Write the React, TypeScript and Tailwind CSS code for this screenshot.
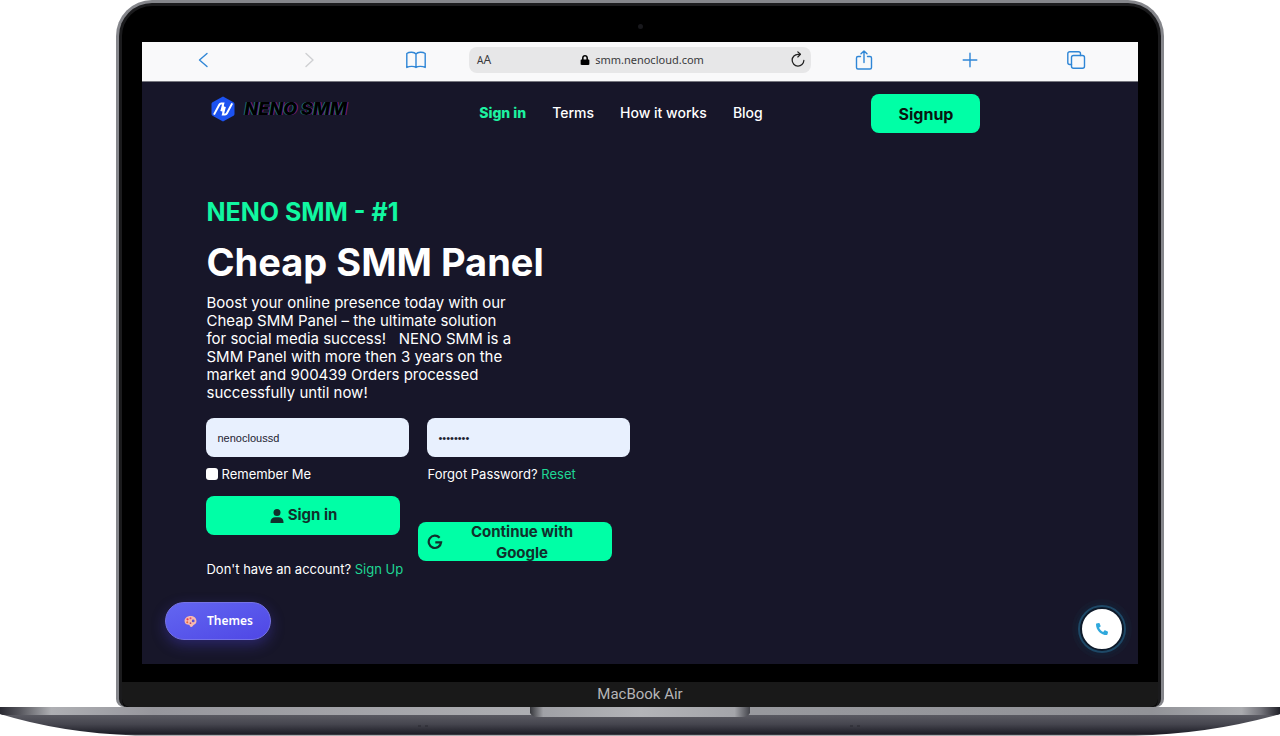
import React from "react";
import { FaLock, FaPhone } from "react-icons/fa";

const navLinks = ["Terms", "How it works", "Blog"];

const fieldClass =
  "h-[39px] w-[203px] rounded-lg bg-[#e8f0fe] px-[11px] font-['Liberation_Sans',sans-serif] text-[11px] text-[#1d2230] outline-none";
const actionClass =
  "flex h-[39px] w-[194px] items-center rounded-lg bg-[#00ffa6] text-[15px] font-bold text-[#10302c]";

function LineIcon({ children, muted = false }: { children: React.ReactNode; muted?: boolean }) {
  return (
    <svg
      viewBox="0 0 24 24"
      fill="none"
      strokeWidth="1.4"
      strokeLinecap="round"
      strokeLinejoin="round"
      aria-hidden="true"
      className={muted ? "size-6 stroke-[#cfd0d2]" : "size-6 stroke-[#2f86d6]"}
    >
      {children}
    </svg>
  );
}

function ToolButton({ label, children }: { label: string; children: React.ReactNode }) {
  return (
    <button type="button" aria-label={label} className="flex justify-center">
      {children}
    </button>
  );
}

function BrowserBar() {
  return (
    <div className="grid h-10 grid-cols-[1fr_1fr_1fr_342px_1fr_1fr_1fr] items-center border-b border-[#77777f] bg-[#f9f9fa] px-2 pb-[3px]">
      <ToolButton label="Back">
        <LineIcon>
          <path d="M15 5.500 7.500 12l7.500 6.500" />
        </LineIcon>
      </ToolButton>
      <ToolButton label="Forward">
        <LineIcon muted>
          <path d="m8 5.500 7 6.500-7 6.500" />
        </LineIcon>
      </ToolButton>
      <ToolButton label="Bookmarks">
        <LineIcon>
          <path d="M12 6C10.300 4 5.500 3.600 2.800 5.500V19.500C5.500 17.900 10.300 18.100 12 19.500C13.700 18.100 18.500 17.900 21.200 19.500V5.500C18.500 3.600 13.700 4 12 6V19.500" />
        </LineIcon>
      </ToolButton>
      <div className="grid h-[26px] grid-cols-[1fr_auto_1fr] items-center rounded-lg bg-[#e7e7e8] pr-1 pl-2 font-['Noto_Sans',sans-serif] text-[#3a3a3c]">
        <span className="flex items-baseline leading-none text-[12px]">
          <span className="text-[10px]">A</span>A
        </span>
        <span className="flex items-center gap-[5px] text-[11px]">
          <FaLock className="size-[10px] text-black" />
          smm.nenocloud.com
        </span>
        <button type="button" aria-label="Reload" className="justify-self-end">
          <svg viewBox="0 0 20 20" fill="none" stroke="#222" strokeWidth="1.4" strokeLinecap="round" strokeLinejoin="round" className="size-[18px]">
            <path d="M16.500 10.500a6.500 6.500 0 1 1-6.500-6.800h2.400" />
            <path d="m9.800 1 2.900 2.700-2.900 2.900" />
          </svg>
        </button>
      </div>
      <ToolButton label="Share">
        <LineIcon>
          <path d="M8.500 8.500H6a1.500 1.500 0 0 0-1.500 1.500v9.500A1.500 1.500 0 0 0 6 21h12a1.500 1.500 0 0 0 1.500-1.500V10A1.500 1.500 0 0 0 18 8.500h-2.500M12 14.500V3M9 5.800 12 2.900l3 2.900" />
        </LineIcon>
      </ToolButton>
      <ToolButton label="New tab">
        <LineIcon>
          <path d="M12 5.200v13.600M5.200 12h13.600" />
        </LineIcon>
      </ToolButton>
      <ToolButton label="Tabs">
        <LineIcon>
          <rect x="7.500" y="7.500" width="13" height="12.800" rx="2" />
          <path d="M7.500 16.500H5.800a2 2 0 0 1-2-2V5.700a2 2 0 0 1 2-2h8.700a2 2 0 0 1 2 2v1.800" />
        </LineIcon>
      </ToolButton>
    </div>
  );
}

function SiteHeader() {
  return (
    <header className="ml-[69px] flex max-w-[769px] items-start justify-between pt-3">
      <a href="#home" className="flex w-[159px] items-center gap-[9px] pt-0.5">
        <svg viewBox="0 0 24 26" className="h-[26px] w-6 shrink-0" aria-hidden="true">
          <path d="M12 .5 22.500 6.300a2 2 0 0 1 1 1.700v10a2 2 0 0 1-1 1.700L12 25.500 1.500 19.700a2 2 0 0 1-1-1.700V8a2 2 0 0 1 1-1.700Z" fill="#1c52f0" />
          <path
            d="M3 18.600 8.300 8.700Q8.900 7.600 10.200 7.600H12.300L10.300 15.200M21.200 7.400 15.900 17.300Q15.300 18.400 14 18.400H11.900L13.900 10.800"
            fill="none"
            stroke="#fff"
            strokeWidth="2"
          />
          <path d="m12.100 8-1.300 4.800 1.200 5.200 1.700-5.200Z" fill="#fff" />
        </svg>
        <span className="whitespace-nowrap text-[18px] leading-6 font-extrabold italic text-black [text-shadow:-1px_0_0_#176b78,1px_0_0_#7c217f]">
          NENO SMM
        </span>
      </a>
      <nav className="flex gap-[26px] pt-[7px] text-[14px] leading-6 font-medium whitespace-nowrap text-white">
        <a href="#signin" className="font-extrabold text-[#1df2a0]">
          Sign in
        </a>
        {navLinks.map((label) => (
          <a key={label} href="#more">
            {label}
          </a>
        ))}
      </nav>
      <button type="button" className="h-[39px] w-[109px] rounded-lg bg-[#00ffa6] text-[16px] font-bold text-[#08150f]">
        Signup
      </button>
    </header>
  );
}

function SignInForm() {
  return (
    <form className="mt-4 text-[13px] text-white" onSubmit={(e) => e.preventDefault()}>
      <div className="flex gap-[18px]">
        <input aria-label="Username" defaultValue="nenocloussd" className={fieldClass} />
        <input aria-label="Password" type="password" defaultValue="password" className={fieldClass} />
      </div>
      <div className="mt-[7px] flex gap-[18px] leading-5">
        <label className="flex w-[203px] items-center gap-[3px]">
          <input type="checkbox" className="size-3 appearance-none rounded-[3px] bg-white" />
          Remember Me
        </label>
        <p>
          Forgot Password?{" "}
          <a href="#reset" className="text-[#1fd694]">
            Reset
          </a>
        </p>
      </div>
      <div className="mt-3 flex gap-[18px]">
        <div className="w-[194px]">
          <button type="submit" className={`${actionClass} justify-center gap-1`}>
            <svg viewBox="0 0 14 14" fill="currentColor" className="size-[14px]" aria-hidden="true">
              <circle cx="7" cy="3.500" r="3.500" />
              <path d="M.5 14V13A4.800 4.800 0 0 1 5.300 8.200h3.400A4.800 4.800 0 0 1 13.500 13V14Z" />
            </svg>
            Sign in
          </button>
          <p className="mt-6 whitespace-nowrap leading-5">
            Don't have an account?{" "}
            <a href="#signup" className="text-[#1fd694]">
              Sign Up
            </a>
          </p>
        </div>
        <button type="button" className={`${actionClass} mt-[26px] pl-[9px] pr-3`}>
          <svg viewBox="0 0 16 16" fill="none" stroke="currentColor" strokeWidth="2.200" className="size-4 shrink-0" aria-hidden="true">
            <path d="M12.600 3.700A6.200 6.200 0 1 0 14.100 8.400H8.300" />
          </svg>
          <span className="grow px-4 leading-[21px]">Continue with Google</span>
        </button>
      </div>
    </form>
  );
}

function Hero() {
  return (
    <main className="ml-16 pt-[61px] text-white">
      <h2 className="text-[25px] leading-9 font-bold text-[#11f7a1]">NENO SMM - #1</h2>
      <h1 className="mt-2 text-[38px] leading-[48px] font-bold">Cheap SMM Panel</h1>
      <p className="mt-2 text-[15px] leading-[18px] whitespace-nowrap">
        Boost your online presence today with our
        <br />
        Cheap SMM Panel – the ultimate solution
        <br />
        for social media success!&nbsp;&nbsp; NENO SMM is a
        <br />
        SMM Panel with more then 3 years on the
        <br />
        market and 900439 Orders processed
        <br />
        successfully until now!
      </p>
      <SignInForm />
    </main>
  );
}

function ThemesButton() {
  return (
    <button
      type="button"
      className="absolute bottom-6 left-[23px] flex h-[38px] w-[106px] items-center justify-center gap-[10px] rounded-full border border-[#7673e6] bg-linear-to-br from-[#6366f1] to-[#4f46e5] font-['Noto_Sans',sans-serif] text-[12px] font-semibold text-white shadow-[0_5px_14px_rgba(79,70,229,0.35)]"
    >
      <svg viewBox="0 0 24 24" className="size-[13px]" aria-hidden="true">
        <path d="M12 2C5.500 2 1 6 1 11c0 5 4 7 8 7 2 0 1 4 4 4 3.500 0 3-3 6-4.500 2.500-1 4-3 4-6C23 5.500 18 2 12 2Z" fill="#f7b9ad" />
        <circle cx="6.500" cy="8" r="2" fill="#e8384f" />
        <circle cx="12" cy="6" r="1.800" fill="#d44b82" />
        <circle cx="17" cy="11" r="2.600" fill="#5b51d8" />
        <circle cx="6" cy="13.500" r="1.800" fill="#e7663a" />
        <circle cx="12" cy="15" r="1.600" fill="#b04a7a" />
      </svg>
      Themes
    </button>
  );
}

function CallButton() {
  return (
    <button
      type="button"
      aria-label="Call"
      className="absolute right-3.5 bottom-[13px] flex size-11 items-center justify-center rounded-full border-2 border-[#0e1a2a] bg-white text-[#2fa8dc] shadow-[0_0_0_2px_#1e4866,0_0_0_5px_#151d31,0_0_0_8px_#171a2d]"
    >
      <FaPhone className="size-3 -scale-x-100" />
    </button>
  );
}

function LaptopBase() {
  return (
    <svg viewBox="0 0 1280 29" preserveAspectRatio="none" className="block h-[29px] w-full" aria-hidden="true">
      <defs>
        <linearGradient id="body" x1="0" y1="0" x2="0" y2="1">
          <stop offset="0.250" stopColor="#5c5c64" />
          <stop offset="0.600" stopColor="#46464f" />
          <stop offset="0.940" stopColor="#1e1e27" />
          <stop offset="1" stopColor="#5a5a60" />
        </linearGradient>
        <linearGradient id="edge">
          <stop offset="0" stopColor="#292931" />
          <stop offset="0.015" stopColor="#55555c" />
          <stop offset="0.040" stopColor="#aeafb3" />
          <stop offset="0.120" stopColor="#97979d" />
          <stop offset="0.410" stopColor="#adaeb2" />
          <stop offset="0.590" stopColor="#98999e" />
          <stop offset="0.900" stopColor="#929398" />
          <stop offset="0.970" stopColor="#aaabaf" />
          <stop offset="0.985" stopColor="#75757c" />
          <stop offset="1" stopColor="#202028" />
        </linearGradient>
        <linearGradient id="notch">
          <stop offset="0" stopColor="#35363b" />
          <stop offset="0.060" stopColor="#a0a1a6" />
          <stop offset="0.500" stopColor="#b3b4b8" />
          <stop offset="0.930" stopColor="#a4a5aa" />
          <stop offset="1" stopColor="#43444b" />
        </linearGradient>
      </defs>
      <path d="M0 0H1280V7Q1210 27 1135 28.500H135Q62 26 0 7Z" fill="url(#body)" />
      <path d="M0 0H1280V7L1277 8H3L0 7Z" fill="url(#edge)" />
      <path d="M530 0H750V6Q748 10 742 10H538Q532 10 530 6Z" fill="url(#notch)" />
      <path d="M418 19h3M425 19h3M850 19h3M857 19h3" stroke="#292931" />
    </svg>
  );
}

export default function App() {
  return (
    <div className="w-full overflow-hidden bg-white font-['Inter',sans-serif]">
      <div className="mx-auto w-[81.800%] rounded-t-[36px] rounded-b-lg bg-[#85868b] px-[3px] pt-[3px]">
        <div className="rounded-t-[33px] rounded-b-lg border-3 border-b-0 border-[#1b1b1d] bg-black">
          <div className="flex h-9 items-center justify-center">
            <span className="mt-1 size-[5px] rounded-full bg-[#18181c]" />
          </div>
          <div className="relative mx-5 min-h-[622px] bg-[#171629]">
            <BrowserBar />
            <SiteHeader />
            <Hero />
            <ThemesButton />
            <CallButton />
          </div>
          <div className="mt-[18px] flex h-[25px] items-center justify-center rounded-b-lg bg-[#191919] font-['Roboto',sans-serif] text-[15px] text-[#b5b5b7]">
            MacBook Air
          </div>
        </div>
      </div>
      <LaptopBase />
    </div>
  );
}
